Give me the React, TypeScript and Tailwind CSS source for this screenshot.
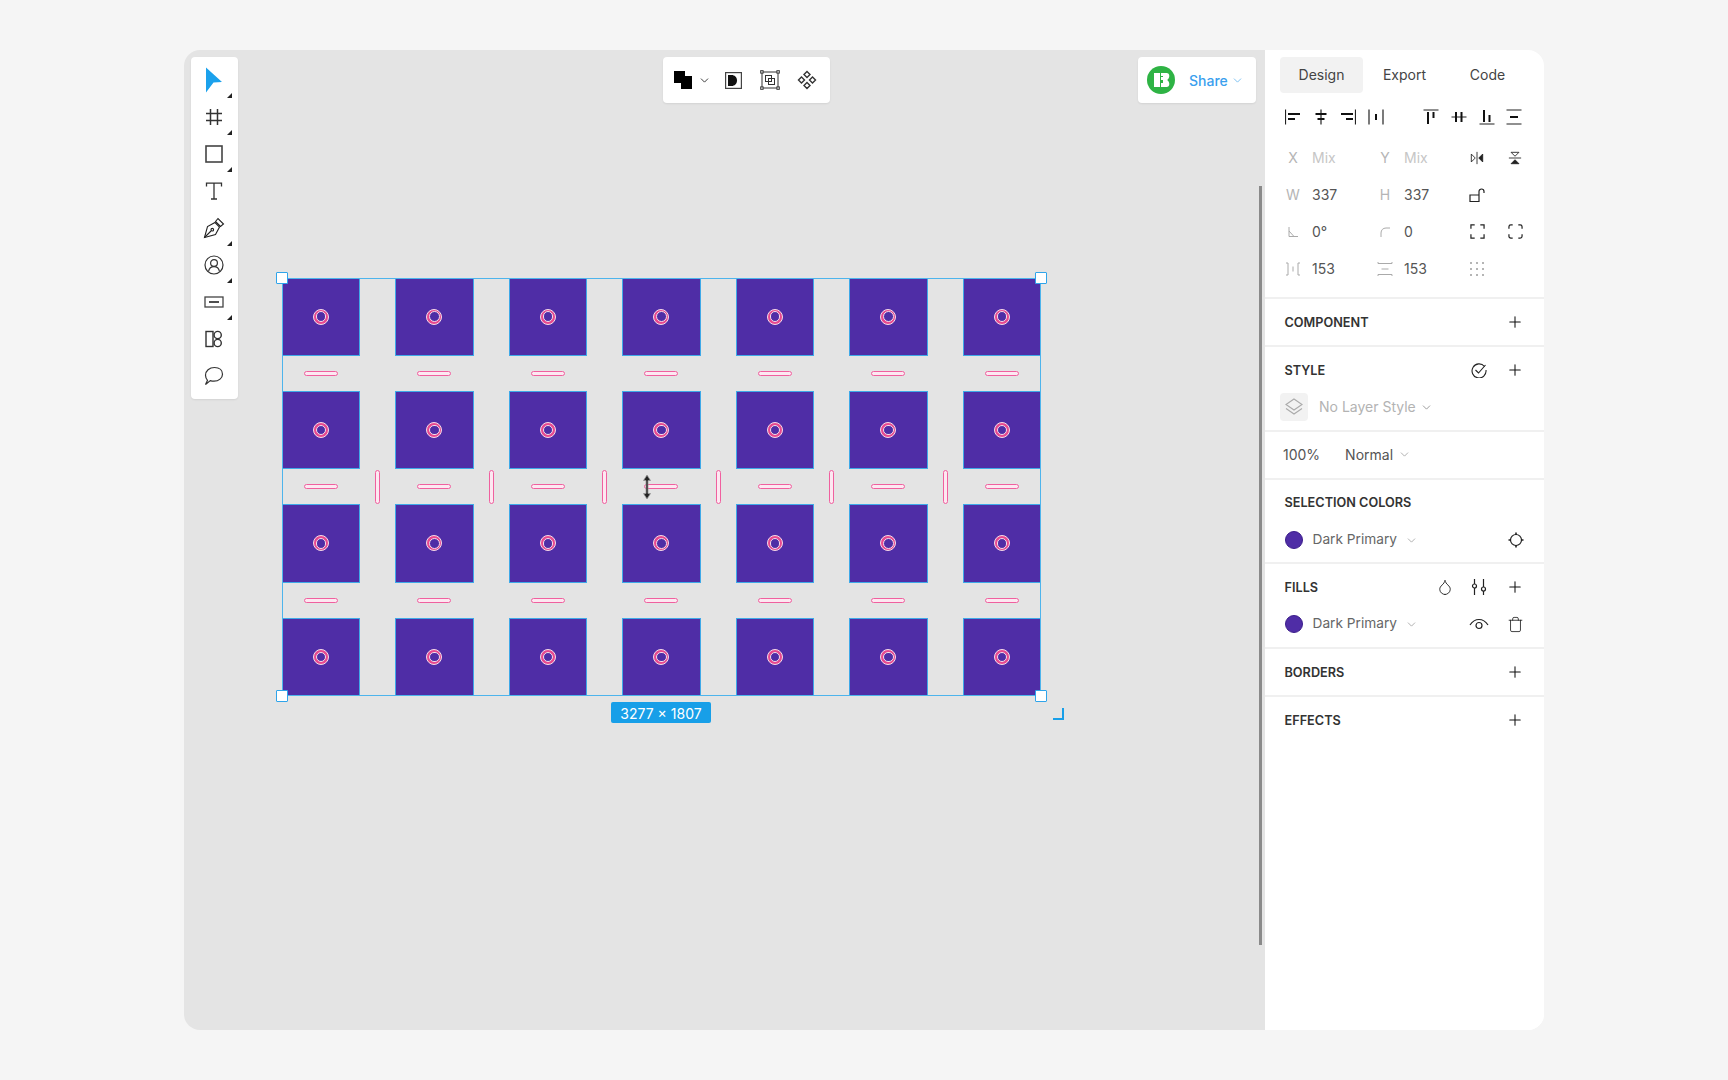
import { ReactNode } from "react";
import { ChevronDown, Droplet, Plus, Trash } from "lucide-react";

const FONT = "font-['Inter',sans-serif]";

function Ico({ children, size = 16, sw = 1.2 }: { children: ReactNode; size?: number; sw?: number }) {
  return (
    <svg width={size} height={size} viewBox="0 0 16 16" fill="none" stroke="currentColor" strokeWidth={sw}>
      {children}
    </svg>
  );
}

/* ---------- left tools ---------- */
const tools: { icon: ReactNode; more: boolean }[] = [
  {
    more: true,
    icon: (
      <svg width="18" height="26" viewBox="0 0 18 26">
        <path d="M1 0.500 L17 15 L8.500 15.500 L1 25.500 Z" fill="#1ba1ec" />
      </svg>
    ),
  },
  {
    more: true,
    icon: (
      <svg width="18" height="18" viewBox="0 0 18 18" stroke="#333" strokeWidth="1.5" fill="none">
        <path d="M5.500 1v16M12.500 1v16M1 5.500h16M1 12.500h16" />
      </svg>
    ),
  },
  {
    more: true,
    icon: (
      <svg width="18" height="18" viewBox="0 0 18 18" fill="none">
        <rect x="1" y="1" width="16" height="16" stroke="#444" strokeWidth="1.600" />
      </svg>
    ),
  },
  {
    more: false,
    icon: (
      <svg width="18" height="18" viewBox="0 0 18 18" fill="none" stroke="#333" strokeWidth="1.300">
        <path d="M1.500 4.500V1.200h15v3.300M9 1.200V17M6 17h6" />
      </svg>
    ),
  },
  {
    more: true,
    icon: (
      <svg width="22" height="22" viewBox="0 0 22 22" fill="none" stroke="#222" strokeWidth="1.100">
        <path d="M1.500 20.500 L4.500 9.500 L12 5.500 L16.500 10 L12.500 17.500 Z" />
        <path d="M12.500 4.500 L15 1.500 L20.500 7 L17.500 9.500 Z" />
        <path d="M1.500 20.500 L8 14" />
        <circle cx="9.300" cy="12.700" r="1.300" />
      </svg>
    ),
  },
  {
    more: true,
    icon: (
      <svg width="20" height="20" viewBox="0 0 20 20" fill="none" stroke="#333" strokeWidth="1.200">
        <circle cx="10" cy="10" r="9" />
        <circle cx="10" cy="8" r="3.400" />
        <path d="M4.500 16.500c.6-3 2.800-4.800 5.500-4.800s4.900 1.800 5.500 4.800" />
      </svg>
    ),
  },
  {
    more: true,
    icon: (
      <svg width="20" height="14" viewBox="0 0 20 14" fill="none" stroke="#444" strokeWidth="1.300">
        <rect x="1" y="2" width="18" height="10" />
        <path d="M5 7h10" strokeWidth="1.600" stroke="#222" />
      </svg>
    ),
  },
  {
    more: false,
    icon: (
      <svg width="18" height="18" viewBox="0 0 18 18" fill="none" stroke="#333" strokeWidth="1.400">
        <rect x="1" y="1.500" width="7" height="15" />
        <circle cx="12.700" cy="5" r="3.600" />
        <circle cx="12.700" cy="13" r="3.600" />
      </svg>
    ),
  },
  {
    more: false,
    icon: (
      <svg width="20" height="20" viewBox="0 0 20 20" fill="none" stroke="#333" strokeWidth="1.200">
        <path d="M1.500 18.500l2-4.200C2.300 12.900 1.500 11.200 1.500 9.300 1.500 4.800 5.300 1.500 10.500 1.500s8 3.100 8 6.800-3.700 6.900-8.500 6.900c-1.300 0-2.600-.2-3.700-.6z" />
      </svg>
    ),
  },
];

function LeftTools() {
  return (
    <div className="absolute left-[7px] top-[7px] flex w-[47px] flex-col rounded-[4px] bg-white py-[4.500px] pr-[1px] shadow-[0_1px_2px_rgba(0,0,0,0.08)]">
      {tools.map((t, i) => (
        <div key={i} className="relative flex h-[37px] items-center justify-center">
          {t.icon}
          {t.more && <div className="absolute bottom-[1px] right-[5px] h-0 w-0 border-b-[5px] border-l-[5px] border-b-[#222] border-l-transparent" />}
        </div>
      ))}
    </div>
  );
}

/* ---------- top tools ---------- */
function TopTools() {
  return (
    <div className="absolute left-[479px] top-[7px] flex h-[46px] w-[167px] items-center rounded-[4px] bg-white pl-[11px] shadow-[0_1px_2px_rgba(0,0,0,0.08)]">
      <svg width="18" height="18" viewBox="0 0 18 18" fill="#000">
        <path d="M0 0h11v5h7v13H7v-6H0z" />
      </svg>
      <ChevronDown size={13} strokeWidth={1.600} className="ml-[6px] text-[#222]" />
      <div className="ml-[14px]">
        <svg width="17" height="17" viewBox="0 0 17 17">
          <rect x="0.600" y="0.600" width="15.800" height="15.800" fill="#fff" stroke="#444" strokeWidth="1.200" />
          <path d="M3 3h3.500c3 0 5.500 2.200 5.500 5.500S9.500 14 6.500 14H3z" fill="#111" />
        </svg>
      </div>
      <div className="ml-[18px]">
        <svg width="20" height="20" viewBox="0 0 20 20" fill="none" stroke="#333" strokeWidth="1">
          <rect x="2" y="2" width="16" height="16" />
          <rect x="5.500" y="5.500" width="6" height="6" />
          <rect x="8.500" y="8.500" width="6" height="6" />
          <g fill="#fff">
            <rect x="0.700" y="0.700" width="2.400" height="2.400" />
            <rect x="16.900" y="0.700" width="2.400" height="2.400" />
            <rect x="0.700" y="16.900" width="2.400" height="2.400" />
            <rect x="16.900" y="16.900" width="2.400" height="2.400" />
          </g>
        </svg>
      </div>
      <div className="ml-[17px]">
        <svg width="20" height="20" viewBox="0 0 20 20" fill="none" stroke="#333" strokeWidth="1.400">
          <path d="M10 1.500l3 3-3 3-3-3zM4.500 7l3 3-3 3-3-3zM15.500 7l3 3-3 3-3-3zM10 12.500l3 3-3 3-3-3z" />
        </svg>
      </div>
    </div>
  );
}

function ShareBox() {
  return (
    <div className="absolute left-[954px] top-[7px] flex h-[46px] w-[118px] items-center rounded-[4px] bg-white pl-[9px] shadow-[0_1px_2px_rgba(0,0,0,0.08)]">
      <svg width="28" height="28" viewBox="0 0 28 28">
        <circle cx="14" cy="14" r="14" fill="#2eb344" />
        <path d="M7 7h6v14H7zM14 7h5.500c1.800 0 2.800 1.300 2.800 3 0 1.600-.7 2.800-1.800 3.500v1c1.100.7 1.800 1.900 1.800 3.500 0 1.700-1 3-2.800 3H14v-4h2v-3h-2v-3h2V10h-2z" fill="#fff" />
      </svg>
      <span className="ml-[14px] text-[14px] font-medium text-[#3aa0ee]">Share</span>
      <ChevronDown size={13} strokeWidth={1.600} className="ml-[3px] text-[#6db9f0]" />
    </div>
  );
}

/* ---------- selected grid on the canvas ---------- */
function Square() {
  return (
    <div className="flex items-center justify-center border border-[#3fa9e8] bg-[#4f2da6]">
      <div className="flex h-[16px] w-[16px] items-center justify-center rounded-full border border-[#f5dcea] bg-[#e8488f]">
        <div className="h-[10.500px] w-[10.500px] rounded-full border border-[#f5dcea] bg-[#4f2da6]" />
      </div>
    </div>
  );
}

function HDash() {
  return (
    <div className="flex items-center justify-center">
      <div className="h-[5px] w-[34px] rounded-full border-[1.500px] border-[#f0609f] bg-[#fde8f1]" />
    </div>
  );
}

function VDash() {
  return (
    <div className="flex items-center justify-center">
      <div className="h-[34px] w-[5px] rounded-full border-[1.500px] border-[#f0609f] bg-[#fde8f1]" />
    </div>
  );
}

function Handle({ className }: { className: string }) {
  return <div className={`absolute h-[12px] w-[12px] rounded-[1px] border-[1.500px] border-[#2fa4ea] bg-white ${className}`} />;
}

function Selection() {
  const cells: ReactNode[] = [];
  for (let r = 0; r < 7; r++) {
    for (let c = 0; c < 13; c++) {
      const key = `${r}-${c}`;
      if (r % 2 === 0 && c % 2 === 0) cells.push(<Square key={key} />);
      else if (r % 2 === 1 && c % 2 === 0) cells.push(<HDash key={key} />);
      else if (r === 3 && c % 2 === 1) cells.push(<VDash key={key} />);
      else cells.push(<div key={key} />);
    }
  }
  return (
    <div className="absolute left-[97.500px] top-[227.500px]">
      <div className="relative grid w-fit grid-cols-[repeat(6,78.500px_35px)_78.500px] grid-rows-[repeat(3,78.400px_35px)_78.400px] outline outline-1 -outline-offset-1 outline-[#4db4ec]">
        {cells}
        <Handle className="-left-[6px] -top-[6px]" />
        <Handle className="-right-[6px] -top-[6px]" />
        <Handle className="-bottom-[6px] -left-[6px]" />
        <Handle className="-bottom-[6px] -right-[6px]" />

        {/* resize cursor */}
        <svg className="absolute left-[357.500px] top-[196.500px]" width="16" height="26" viewBox="0 0 16 26">
          <path d="M8 1L11.500 6.500H9V19.500H11.500L8 25L4.500 19.500H7V6.500H4.500Z" fill="#222" stroke="#999" strokeOpacity="0.8" strokeWidth="1" />
        </svg>

        <div className="absolute left-[329.500px] top-[424.500px] flex h-[21px] w-[100px] items-center justify-center rounded-[2px] bg-[#189fe8] pt-[1px] text-[14px] text-white">3277 × 1807</div>
        <div className="absolute left-[771.500px] top-[430.500px] h-[12px] w-[11px] border-b-2 border-r-2 border-[#189fe8]" />
      </div>
    </div>
  );
}

/* ---------- right panel ---------- */
function AlignIcon({ d, t }: { d: string; t: string }) {
  return (
    <div className="flex w-[27.700px] items-center justify-center">
      <svg width="16" height="16" viewBox="0 0 16 16">
        <path d={d} stroke="#222" strokeWidth="1.200" fill="none" />
        <path d={t} stroke="#111" strokeWidth="2" fill="none" />
      </svg>
    </div>
  );
}

const alignsA = [
  { d: "M0.500 0.500v15", t: "M3 5h12M3 10h7" },
  { d: "M8 0.500v15", t: "M2.500 5h11M4.500 10h7" },
  { d: "M15.500 0.500v15", t: "M1 5h12M6 10h7" },
  { d: "M1 0.500v15M15 0.500v15", t: "M8 5v6" },
];
const alignsB = [
  { d: "M0.500 1h15", t: "M5 3v12M10.500 3v6" },
  { d: "M0.500 8h15", t: "M5 3v10M10.500 3v10" },
  { d: "M0.500 15h15", t: "M5 1v12M10.500 6v7" },
  { d: "M0.500 1h15M0.500 15h15", t: "M4 8h8" },
];

function PropRow({ children }: { children: ReactNode }) {
  return <div className="flex h-[37px] items-center text-[14px]">{children}</div>;
}

function Value({ children, muted, second }: { children: ReactNode; muted?: boolean; second?: boolean }) {
  return <span className={`ml-[10px] ${second ? "w-[55px]" : "w-[64px]"} ${muted ? "text-[#c6c6c6]" : "text-[#555555]"}`}>{children}</span>;
}

function Glyph({ children }: { children: ReactNode }) {
  return <span className="flex w-[18px] items-center justify-center text-[14px] text-[#b5b5b5]">{children}</span>;
}

function SectionHead({ title, right }: { title: string; right?: ReactNode }) {
  return (
    <div className="flex h-[46px] items-center pl-[19.500px] pr-[20px]">
      <span className="flex-1 pt-[1px] text-[12.700px] font-semibold text-[#333333]">{title}</span>
      {right}
      <Plus size={18} strokeWidth={1.400} className="text-[#111]" />
    </div>
  );
}

function Swatch({ children }: { children?: ReactNode }) {
  return (
    <div className="flex h-[26px] items-center pl-[19.500px] pr-[20px] text-[13.700px] text-[#666666]">
      <div className="h-[18px] w-[18px] rounded-full border border-[#3c1e8c] bg-[#4f2da6]" />
      <span className="ml-[10px] pb-[1px]">Dark Primary</span>
      <ChevronDown size={13} strokeWidth={1.400} className="ml-[8px] text-[#999]" />
      <div className="ml-auto flex items-center text-[#222]">{children}</div>
    </div>
  );
}

function Panel() {
  return (
    <div className={`flex h-full w-[279px] flex-col bg-white ${FONT}`}>
      <div className="border-b-2 border-[#f0f0f0] pb-[10px]">
        <div className="mt-[7px] flex pl-[15px] text-[14px] text-[#444444]">
          <div className="flex h-[36px] w-[83px] items-center justify-center rounded-[4px] bg-[#f2f2f2] pb-[1px]">Design</div>
          <div className="flex h-[36px] w-[83px] items-center justify-center pb-[1px]">Export</div>
          <div className="flex h-[36px] w-[83px] items-center justify-center pb-[1px]">Code</div>
        </div>
        <div className="mt-[10px] flex h-[28px] pl-[14px]">
          {alignsA.map((a, i) => <AlignIcon key={i} {...a} />)}
          <div className="w-[27.700px]" />
          {alignsB.map((a, i) => <AlignIcon key={i} {...a} />)}
        </div>
        <div className="mt-[8px] pl-[19px]">
          <PropRow>
            <Glyph>X</Glyph>
            <Value muted>Mix</Value>
            <Glyph>Y</Glyph>
            <Value muted second>Mix</Value>
            <div className="flex w-[36px] justify-center text-[#222]">
              <Ico size={14} sw={1}><path d="M1.500 3.500L6 8l-4.500 4.500z" /><path d="M14.500 3.500L10 8l4.500 4.500z" fill="#222" /><path d="M8 1v14" /></Ico>
            </div>
            <div className="flex w-[40px] justify-center text-[#222]">
              <Ico size={14} sw={1}><path d="M3.500 1.500L8 6l4.500-4.500z" /><path d="M3.500 14.500L8 10l4.500 4.500z" fill="#222" /><path d="M1 8h14" /></Ico>
            </div>
          </PropRow>
          <PropRow>
            <Glyph>W</Glyph>
            <Value>337</Value>
            <Glyph>H</Glyph>
            <Value second>337</Value>
            <div className="flex w-[36px] justify-center text-[#222]">
              <Ico><path d="M1 8h9v6.500H1zM10 8V4.500a2.500 2.500 0 0 1 5 0V6" /></Ico>
            </div>
          </PropRow>
          <PropRow>
            <Glyph>
              <svg width="12" height="12" viewBox="0 0 12 12" fill="none" stroke="#aaa" strokeWidth="1"><path d="M2 1v9.500h9M2 5l5 5.500" /></svg>
            </Glyph>
            <Value>0°</Value>
            <Glyph>
              <svg width="12" height="12" viewBox="0 0 12 12" fill="none" stroke="#aaa" strokeWidth="1"><path d="M2 11V7c0-3 2-5 5-5h4" /></svg>
            </Glyph>
            <Value second>0</Value>
            <div className="flex w-[36px] justify-center text-[#222]">
              <Ico size={15} sw={1.300}><path d="M1 5V1h4M11 1h4v4M15 11v4h-4M5 15H1v-4" /></Ico>
            </div>
            <div className="flex w-[40px] justify-center text-[#222]">
              <Ico size={15} sw={1.300}><path d="M1 5V3a2 2 0 0 1 2-2h2M11 1h2a2 2 0 0 1 2 2v2M15 11v2a2 2 0 0 1-2 2h-2M5 15H3a2 2 0 0 1-2-2v-2" /></Ico>
            </div>
          </PropRow>
          <PropRow>
            <Glyph>
              <svg width="16" height="14" viewBox="0 0 16 14" fill="none" stroke="#aaa" strokeWidth="1"><path d="M1 1h2v12H1M15 1h-2v12h2M8 4.500v5" /></svg>
            </Glyph>
            <Value>153</Value>
            <Glyph>
              <svg width="16" height="16" viewBox="0 0 16 16" fill="none" stroke="#aaa" strokeWidth="1"><path d="M1 1v1.500h14V1M1 15v-1.500h14V15M4.500 8h7" /></svg>
            </Glyph>
            <Value second>153</Value>
            <div className="flex w-[36px] justify-center">
              <svg width="14" height="14" viewBox="0 0 14 14" fill="#b5b5b5">
                {[1, 7, 13].flatMap((y) => [1, 7, 13].map((x) => <rect key={`${x}-${y}`} x={x - 1} y={y - 1} width="2" height="2" />))}
              </svg>
            </div>
          </PropRow>
        </div>
      </div>

      <div className="border-b-2 border-[#f0f0f0]">
        <SectionHead title="COMPONENT" />
      </div>

      <div className="border-b-2 border-[#f0f0f0] pb-[9px]">
        <SectionHead
          title="STYLE"
          right={
            <svg className="mr-[19px]" width="16" height="16" viewBox="0 0 16 16" fill="none" stroke="#222" strokeWidth="1.100">
              <path d="M13.500 4.500A7 7 0 1 0 15 8" />
              <path d="M4.500 8l3 3 7-8" />
            </svg>
          }
        />
        <div className="flex h-[28px] items-center pl-[15px] text-[14px] text-[#b3b3b3]">
          <div className="flex h-[28px] w-[28px] items-center justify-center rounded-[4px] bg-[#f2f2f2]">
            <svg width="20" height="20" viewBox="0 0 20 20" fill="none" stroke="#aaa" strokeWidth="1.100">
              <path d="M10 2l8 5.500-8 5.500-8-5.500z" />
              <path d="M2 11.500L10 17l8-5.500" />
            </svg>
          </div>
          <span className="ml-[11px] pb-[1px]">No Layer Style</span>
          <ChevronDown size={13} strokeWidth={1.500} className="ml-[4px] text-[#888]" />
        </div>
      </div>

      <div className="flex h-[48px] items-center border-b-2 border-[#f0f0f0] pb-[2px] pl-[18px] text-[14px] text-[#555555]">
        <span>100%</span>
        <span className="ml-[25px]">Normal</span>
        <ChevronDown size={13} strokeWidth={1.400} className="ml-[5px] text-[#999]" />
      </div>

      <div className="border-b-2 border-[#f0f0f0] pb-[9px]">
        <div className="flex h-[44px] items-center pl-[19.500px]">
          <span className="pt-[1px] text-[12.700px] font-semibold text-[#333333]">SELECTION COLORS</span>
        </div>
        <div className="mt-[3px]">
          <Swatch>
            <svg width="16" height="16" viewBox="0 0 16 16" fill="none" stroke="#222" strokeWidth="1.200">
              <circle cx="8" cy="8" r="5.500" />
              <path d="M8 .5v2.500M8 13v2.500M.5 8H3M13 8h2.500" strokeWidth="1.600" />
            </svg>
          </Swatch>
        </div>
      </div>

      <div className="border-b-2 border-[#f0f0f0] pb-[10px]">
        <SectionHead
          title="FILLS"
          right={
            <div className="mr-[18px] flex items-center gap-[16px] text-[#222]">
              <Droplet size={18} strokeWidth={1.200} />
              <svg width="18" height="18" viewBox="0 0 18 18" fill="none" stroke="#222" strokeWidth="1.200">
                <path d="M4.500 1v5M4.500 10v7M13.500 1v8M13.500 13v4" />
                <circle cx="4.500" cy="8" r="2" />
                <circle cx="13.500" cy="11" r="2" />
              </svg>
            </div>
          }
        />
        <div className="mt-[1px]">
          <Swatch>
            <svg className="mr-[18px]" width="20" height="14" viewBox="0 0 20 14" fill="none" stroke="#222" strokeWidth="1.200">
              <path d="M1 8c2.300-3.500 5.400-5.500 9-5.500S16.700 4.500 19 8" />
              <circle cx="10" cy="8.500" r="3" />
            </svg>
            <Trash size={17} strokeWidth={1.200} />
          </Swatch>
        </div>
      </div>

      <div className="border-b-2 border-[#f0f0f0]">
        <SectionHead title="BORDERS" />
      </div>
      <SectionHead title="EFFECTS" />
      <div className="flex-1 bg-white" />
    </div>
  );
}

export default function App() {
  return (
    <div className={`min-h-screen bg-[#f5f5f5] pl-[184px] pt-[50px] ${FONT}`}>
      <div className="flex h-[980px] w-[1360px] overflow-hidden rounded-2xl">
        <div className="relative flex-1 bg-[#e4e4e4]">
          <LeftTools />
          <TopTools />
          <ShareBox />
          <Selection />
          <div className="absolute left-[1075px] top-[136px] h-[759px] w-[3px] bg-[#8a8a8a]" />
        </div>
        <Panel />
      </div>
    </div>
  );
}
